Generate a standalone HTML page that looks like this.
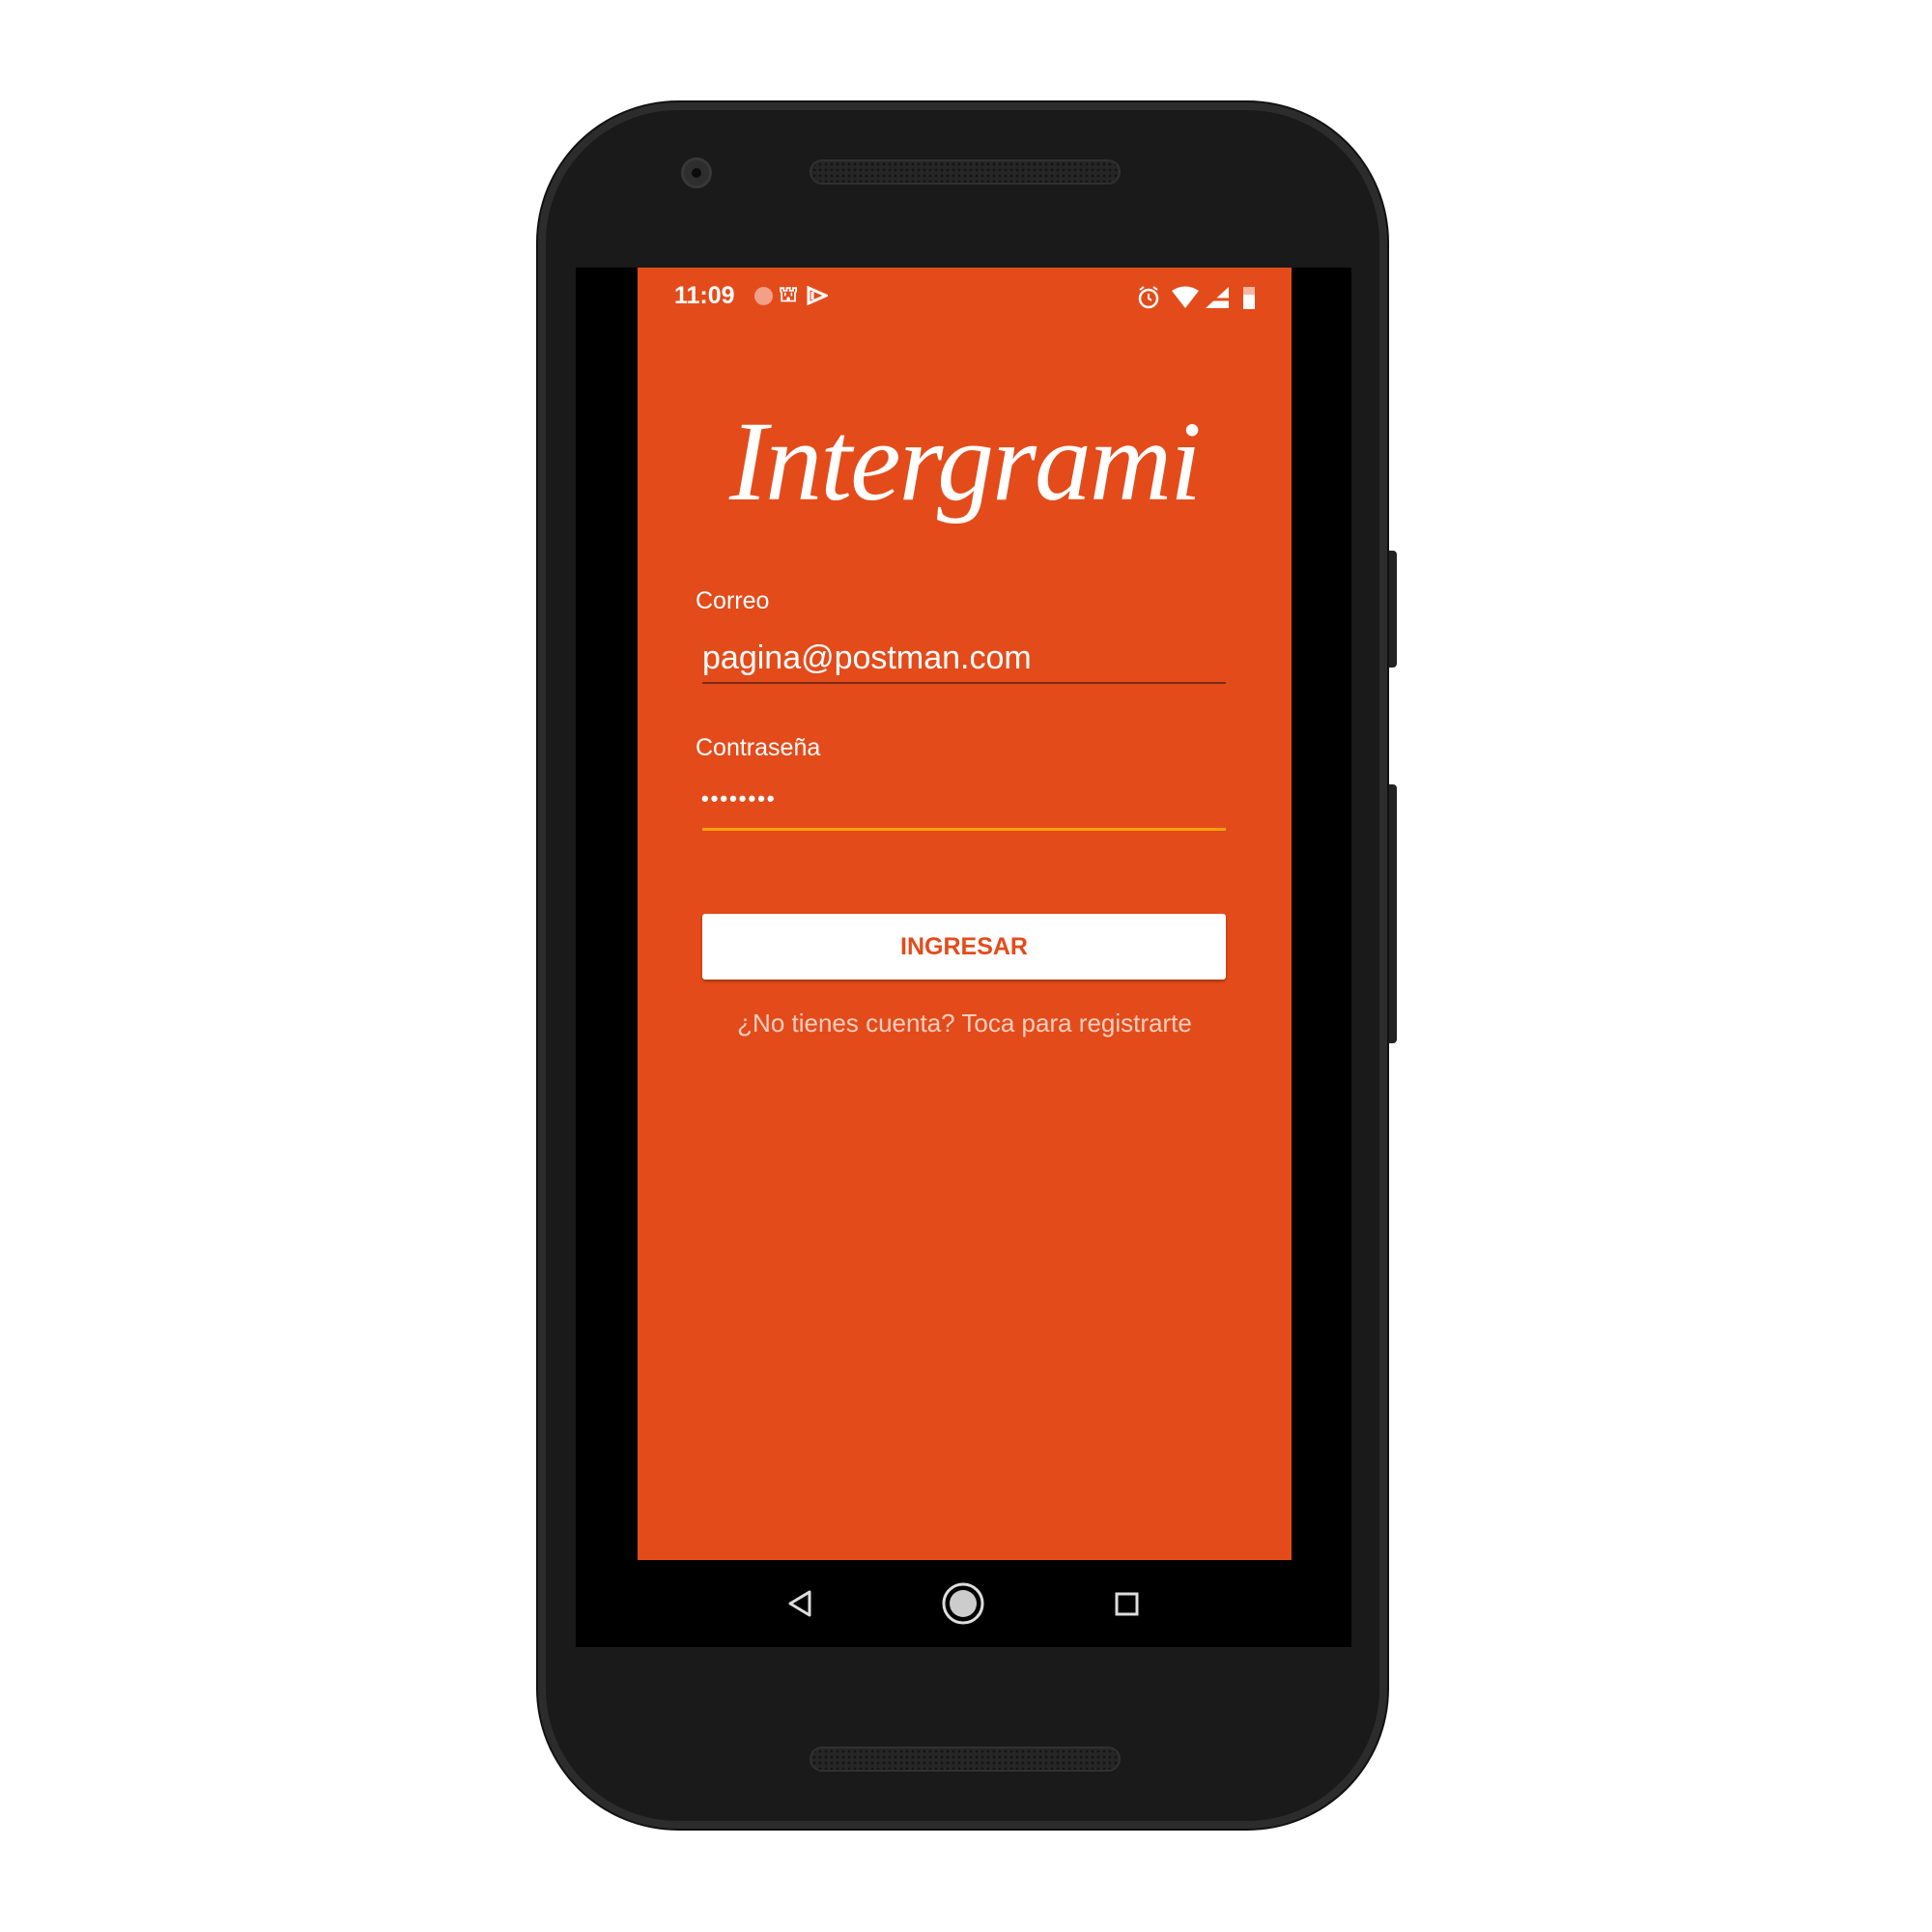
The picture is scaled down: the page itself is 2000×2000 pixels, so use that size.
<!DOCTYPE html>
<html><head><meta charset="utf-8"><style>
*{margin:0;padding:0;box-sizing:border-box}
body{width:2000px;height:2000px;background:#fff;position:relative;overflow:hidden;font-family:"Liberation Sans",sans-serif}
.abs{position:absolute}
.phone{left:557px;top:106px;width:879px;height:1787px;border-radius:145px;background:#1a1a1a;border:8px solid #2c2c2c;box-shadow:0 0 0 2px #111}
.btn{background:#222;border-radius:0 4px 4px 0}
.spk{background:#262626;border-radius:14px;border:2px solid #303030;background-image:radial-gradient(#151515 1.3px,transparent 1.6px);background-size:6px 6px}
.screen{left:596px;top:277px;width:803px;height:1428px;background:#000}
.app{left:660px;top:277px;width:677px;height:1338px;background:#e44b1a}
.t{color:#fff;white-space:nowrap}
</style></head><body>
<div class="abs btn" style="left:1436px;top:570px;width:10px;height:121px"></div>
<div class="abs btn" style="left:1436px;top:812px;width:10px;height:268px"></div>
<div class="abs phone"></div>
<div class="abs" style="left:705px;top:163px;width:32px;height:32px;border-radius:50%;background:#2e2e2e;border:3px solid #383838"><div style="margin:8px;width:10px;height:10px;border-radius:50%;background:#0c0c0c"></div></div>
<div class="abs spk" style="left:838px;top:165px;width:322px;height:26px"></div>
<div class="abs spk" style="left:838px;top:1808px;width:322px;height:26px"></div>
<div class="abs screen"></div>
<div class="abs app"></div>
<div class="abs t" style="left:698px;top:292px;font-size:25px;font-weight:bold">11:09</div>
<div class="abs" style="left:781px;top:297px;width:19px;height:19px;border-radius:50%;background:#f3a088"></div>
<div class="abs t" style="left:806px;top:292px;font-size:22px;font-weight:bold">⛫</div>
<svg class="abs" style="left:835px;top:296px" width="22" height="20"><path d="M2 2L20 10L2 18Z M6 6L6 14" fill="none" stroke="#fff" stroke-width="3"/></svg>
<svg class="abs" style="left:1175px;top:293px" width="130" height="30">
<circle cx="14" cy="16" r="9" fill="none" stroke="#fff" stroke-width="2.5"/><path d="M14 11V16L17 18M5 7L9 4M23 7L19 4" stroke="#fff" stroke-width="2" fill="none"/>
<path d="M38 8Q52 -1 66 8L52 26Z" fill="#fff"/>
<path d="M73 26L97 4V26Z" fill="#fff"/><path d="M73 17L97 17" stroke="#e44b1a" stroke-width="3"/>
<rect x="112" y="4" width="12" height="23" fill="#fff" opacity=".6"/><rect x="112" y="12" width="12" height="15" fill="#fff"/>
</svg>
<div class="abs t" style="left:755px;top:410px;font-family:'Liberation Serif',serif;font-style:italic;font-size:118px;letter-spacing:-2px;font-weight:300">Intergrami</div>
<div class="abs t" style="left:720px;top:608px;font-size:25px">Correo</div>
<div class="abs t" style="left:727px;top:662px;font-size:34px">pagina@postman.com</div>
<div class="abs" style="left:727px;top:706px;width:542px;height:2px;background:#7a2a10"></div>
<div class="abs t" style="left:720px;top:760px;font-size:25px">Contraseña</div>
<div class="abs t" style="left:726px;top:814px;font-size:22px;font-weight:bold;letter-spacing:2px">••••••••</div>
<div class="abs" style="left:727px;top:857px;width:542px;height:3px;background:#f5a00f"></div>
<div class="abs" style="left:727px;top:946px;width:542px;height:68px;background:#fff;border-radius:3px;box-shadow:0 2px 3px rgba(0,0,0,.3);color:#e44b1a;font-weight:bold;font-size:25px;text-align:center;line-height:68px">INGRESAR</div>
<div class="abs" style="left:660px;top:1044px;width:677px;text-align:center;color:#f9cfc0;font-size:26px">¿No tienes cuenta? Toca para registrarte</div>
<svg class="abs" style="left:800px;top:1630px" width="400" height="60">
<path d="M38 18L38 42L18 30Z" fill="none" stroke="#ddd" stroke-width="3" stroke-linejoin="round"/>
<circle cx="197" cy="30" r="20" fill="none" stroke="#ddd" stroke-width="3"/><circle cx="197" cy="30" r="14" fill="#ccc"/>
<rect x="356" y="20" width="21" height="21" fill="none" stroke="#ddd" stroke-width="3"/>
</svg>
</body></html>
